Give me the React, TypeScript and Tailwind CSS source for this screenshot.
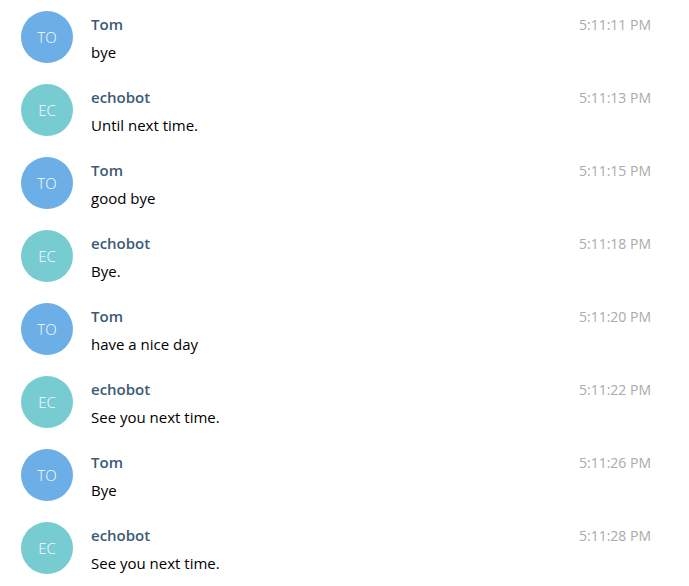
import React from 'react';

type Msg = { user: string; text: string; time: string };

const messages: Msg[] = [
  { user: 'Tom', text: 'bye', time: '5:11:11 PM' },
  { user: 'echobot', text: 'Until next time.', time: '5:11:13 PM' },
  { user: 'Tom', text: 'good bye', time: '5:11:15 PM' },
  { user: 'echobot', text: 'Bye.', time: '5:11:18 PM' },
  { user: 'Tom', text: 'have a nice day', time: '5:11:20 PM' },
  { user: 'echobot', text: 'See you next time.', time: '5:11:22 PM' },
  { user: 'Tom', text: 'Bye', time: '5:11:26 PM' },
  { user: 'echobot', text: 'See you next time.', time: '5:11:28 PM' },
];

const Row: React.FC<{ m: Msg }> = ({ m }) => {
  const isBot = m.user === 'echobot';
  return (
    <div className="flex h-[73px] pl-[21px] pr-[38px]">
      <div
        className={`w-[52px] h-[52px] shrink-0 rounded-full flex items-center justify-center text-white text-[15px] font-light ${
          isBot ? 'bg-[#77ccd1]' : 'bg-[#6caee6]'
        }`}
      >
        {m.user.slice(0, 2).toUpperCase()}
      </div>
      <div className="ml-[18px] flex-1">
        <div className="flex justify-between items-baseline mt-[3px]">
          <span className="text-[15px] font-semibold leading-5 text-[#3b5a77]">{m.user}</span>
          <span className="text-[14px] text-[#aaaaaa]">{m.time}</span>
        </div>
        <div className="text-[15px] leading-5 text-black mt-[7px]">{m.text}</div>
      </div>
    </div>
  );
};

export default function App() {
  return (
    <div className="w-[689px] h-[586px] bg-white overflow-hidden pt-[11px] font-['Open_Sans',sans-serif]">
      {messages.map((m, i) => (
        <Row key={i} m={m} />
      ))}
    </div>
  );
}
